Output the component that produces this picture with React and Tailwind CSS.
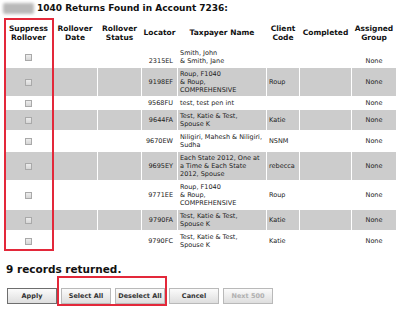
import React from 'react';

const rows = [
  { loc: '2315EL', name: ['Smith, John', '& Smith, Jane'], code: '', bottom: true },
  { loc: '9198EF', name: ['Roup, F1040', '& Roup,', 'COMPREHENSIVE'], code: 'Roup' },
  { loc: '9568FU', name: ['test, test pen int'], code: '' },
  { loc: '9644FA', name: ['Test, Katie & Test,', 'Spouse K'], code: 'Katie' },
  { loc: '9670EW', name: ['Niligiri, Mahesh & Niligiri,', 'Sudha'], code: 'NSNM' },
  { loc: '9695EY', name: ['Each State 2012, One at', 'a Time & Each State', '2012, Spouse'], code: 'rebecca' },
  { loc: '9771EE', name: ['Roup, F1040', '& Roup,', 'COMPREHENSIVE'], code: 'Roup' },
  { loc: '9790FA', name: ['Test, Katie & Test,', 'Spouse K'], code: 'Katie' },
  { loc: '9790FC', name: ['Test, Katie & Test,', 'Spouse K'], code: 'Katie' },
];

const Checkbox = () => (
  <span className="inline-block w-[7px] h-[7px] border border-[#a9a9a9] bg-gradient-to-b from-[#ededed] to-[#d6d6d6] align-middle"></span>
);

const Button = ({ children, disabled, primary }) => (
  <button
    className={
      'w-[50px] h-[16px] border bg-gradient-to-b from-[#fbfbfb] to-[#dedede] text-[6.5px] font-bold leading-none ' +
      (primary ? 'border-[#6e6e6e] ' : 'border-[#b9b9b9] ') +
      (disabled ? 'text-[#b0b0b0]' : 'text-[#333]')
    }
  >
    {children}
  </button>
);

export default function App() {
  return (
    <div className="relative w-[402px] h-[309px] bg-white overflow-hidden text-[#222]" style={{ fontFamily: '"DejaVu Sans", Verdana, sans-serif' }}>
      {/* title */}
      <div className="flex items-center h-[15px] pl-[3px] pt-[1px]">
        <span className="w-[31px] h-[11px] mr-[3px] rounded-[2px] bg-[#b9b9b9] blur-[1.5px]"></span>
        <span className="text-[9px] font-bold text-[#111] leading-none">1040 Returns Found in Account 7236:</span>
      </div>

      <table className="ml-[4px] mt-[3px] table-fixed border-separate border-spacing-[1px] text-[6.5px] text-[#222]">
        <colgroup>
          <col className="w-[47px]" />
          <col className="w-[44px]" />
          <col className="w-[43px]" />
          <col className="w-[35px]" />
          <col className="w-[88px]" />
          <col className="w-[32px]" />
          <col className="w-[51px]" />
          <col className="w-[44px]" />
        </colgroup>
        <thead>
          <tr className="h-[27px] text-[7.5px] leading-[9px] font-bold text-[#111]">
            <th className="align-middle text-center">Suppress<br />Rollover</th>
            <th className="align-middle text-center">Rollover<br />Date</th>
            <th className="align-middle text-center">Rollover<br />Status</th>
            <th className="align-middle text-center">Locator</th>
            <th className="align-middle text-center">Taxpayer Name</th>
            <th className="align-middle text-center">Client<br />Code</th>
            <th className="align-middle text-center">Completed</th>
            <th className="align-middle text-center">Assigned<br />Group</th>
          </tr>
        </thead>
        <tbody>
          {rows.map((r, i) => (
            <tr key={r.loc} className={i % 2 === 1 ? 'bg-[#cccccc]' : 'bg-white'}>
              <td className="py-[2px] text-center align-middle leading-none"><Checkbox /></td>
              <td></td>
              <td></td>
              <td className={'py-[2px] pr-[4px] text-right leading-[8px] text-[#222] ' + (r.bottom ? 'align-bottom' : 'align-middle')}>{r.loc}</td>
              <td className="py-[2px] pl-[2px] leading-[8px] align-middle whitespace-nowrap text-[#222]">
                {r.name.map((n) => (
                  <div key={n}>{n}</div>
                ))}
              </td>
              <td className="py-[2px] pl-[2px] leading-[8px] align-middle text-[#222]">{r.code}</td>
              <td></td>
              <td className={'py-[2px] text-center leading-[8px] text-[#222] ' + (r.bottom ? 'align-bottom' : 'align-middle')}>None</td>
            </tr>
          ))}
        </tbody>
      </table>

      <div className="mt-[11px] ml-[6px] text-[10.5px] font-bold leading-[12px] text-[#111]">9 records returned.</div>

      <div className="flex gap-[4px] ml-[7px] mt-[13px]">
        <Button primary>Apply</Button>
        <Button>Select All</Button>
        <Button>Deselect All</Button>
        <Button>Cancel</Button>
        <Button disabled>Next 500</Button>
      </div>

      {/* annotation boxes */}
      <div className="absolute left-[4px] top-[18px] w-[50px] h-[233px] border-2 border-[#e3283a]"></div>
      <div className="absolute left-[57px] top-[276px] w-[110px] h-[30px] border-2 border-[#e3283a]"></div>
    </div>
  );
}
